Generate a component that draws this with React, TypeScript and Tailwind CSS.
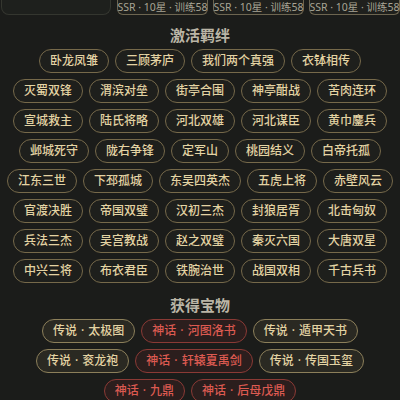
const bondRows: string[][] = [
  ["卧龙凤雏", "三顾茅庐", "我们两个真强", "衣钵相传"],
  ["灭蜀双锋", "渭滨对垒", "街亭合围", "神亭酣战", "苦肉连环"],
  ["宣城救主", "陆氏将略", "河北双雄", "河北谋臣", "黄巾鏖兵"],
  ["邺城死守", "陇右争锋", "定军山", "桃园结义", "白帝托孤"],
  ["江东三世", "下邳孤城", "东吴四英杰", "五虎上将", "赤壁风云"],
  ["官渡决胜", "帝国双璧", "汉初三杰", "封狼居胥", "北击匈奴"],
  ["兵法三杰", "吴宫教战", "赵之双璧", "秦灭六国", "大唐双星"],
  ["中兴三将", "布衣君臣", "铁腕治世", "战国双相", "千古兵书"],
];

type Treasure = { tier: "传说" | "神话"; name: string };

const treasureRows: Treasure[][] = [
  [
    { tier: "传说", name: "太极图" },
    { tier: "神话", name: "河图洛书" },
    { tier: "传说", name: "遁甲天书" },
  ],
  [
    { tier: "传说", name: "衮龙袍" },
    { tier: "神话", name: "轩辕夏禹剑" },
    { tier: "传说", name: "传国玉玺" },
  ],
  [
    { tier: "神话", name: "九鼎" },
    { tier: "神话", name: "后母戊鼎" },
  ],
];

function SectionTitle({ children }: { children: string }) {
  return (
    <div className="flex h-5 items-center justify-center text-[15px] font-bold text-[#bab5a6]">
      {children}
    </div>
  );
}

function StatTag() {
  return (
    <div className="flex h-[15px] w-[91px] shrink-0 items-center justify-center whitespace-nowrap rounded-b-md border border-t-0 border-[#6d6550] bg-[#1f201d] text-[10.5px] leading-none text-[#a8a494]">
      SSR · 10星 · 训练58
    </div>
  );
}

export default function App() {
  return (
    <div
      className="h-[400px] w-[400px] overflow-hidden bg-[#1b1c1a]"
      style={{ fontFamily: '"Noto Sans", "Noto Sans CJK SC", sans-serif' }}
    >
      <div className="flex h-[15px] gap-[5px] pl-[1px]">
        <div className="mr-[1px] h-[15px] w-[110px] shrink-0 rounded-b-lg border border-t-0 border-[#34362f] bg-[#1e201d]" />
        <StatTag />
        <StatTag />
        <StatTag />
      </div>

      <div className="mt-[10px]">
        <SectionTitle>激活羁绊</SectionTitle>
      </div>
      <div className="mt-1 flex flex-col gap-[6px]">
        {bondRows.map((row, i) => (
          <div key={i} className="flex justify-center gap-[6px]">
            {row.map((name) => (
              <div
                key={name}
                className="flex h-6 items-center whitespace-nowrap rounded-full border border-[#76694a] bg-[#1e1f1c] px-2.5 text-xs font-medium leading-none text-[#e3d3a3]"
              >
                {name}
              </div>
            ))}
          </div>
        ))}
      </div>

      <div className="mt-3">
        <SectionTitle>获得宝物</SectionTitle>
      </div>
      <div className="mt-1 flex flex-col gap-[6px]">
        {treasureRows.map((row, i) => (
          <div key={i} className="flex justify-center gap-[6px]">
            {row.map((t) => (
              <div
                key={t.name}
                className={
                  t.tier === "神话"
                    ? "flex h-6 items-center whitespace-nowrap rounded-full border border-[#8a3a35] bg-[#2b1e1d] px-2.5 text-xs font-medium leading-none text-[#dc5a51]"
                    : "flex h-6 items-center whitespace-nowrap rounded-full border border-[#8c7f5a] bg-[#2a2922] px-2.5 text-xs font-medium leading-none text-[#e3d3a3]"
                }
              >
                {t.tier}
                <span className="mx-[4px]">·</span>
                {t.name}
              </div>
            ))}
          </div>
        ))}
      </div>
    </div>
  );
}
